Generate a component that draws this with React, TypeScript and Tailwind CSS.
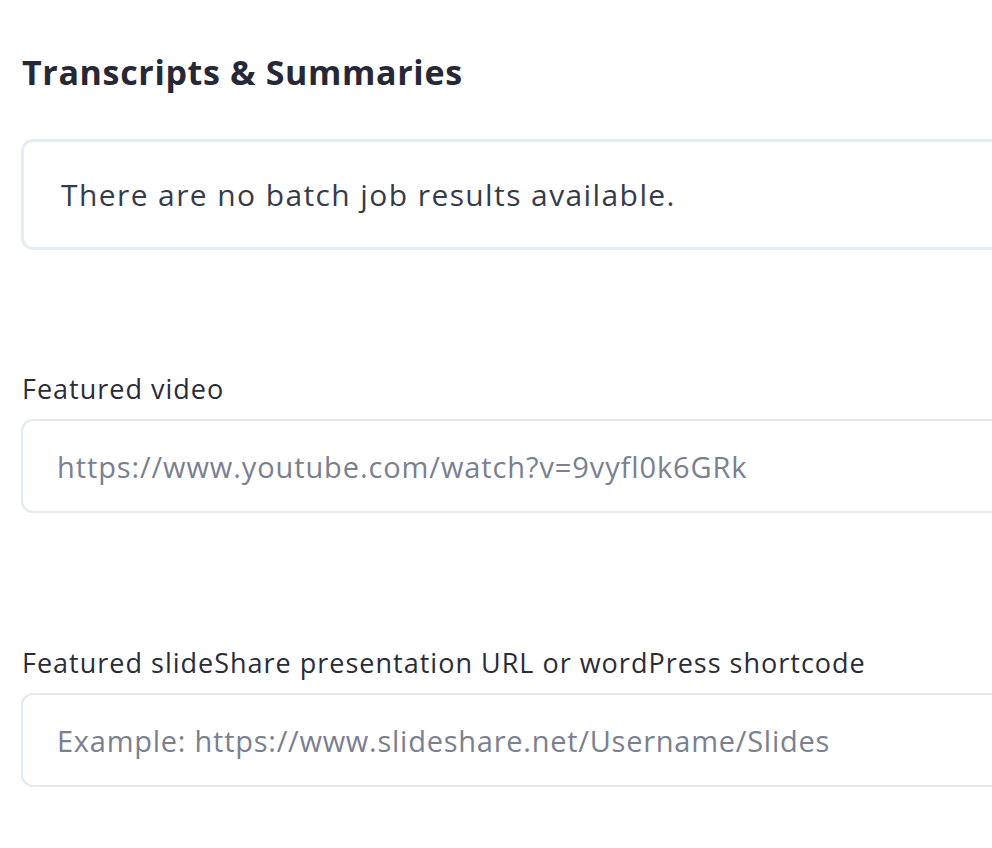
import React from "react";

export default function App() {
  return (
    <div className="h-[848px] w-[992px] overflow-hidden bg-white font-['Open_Sans','Lato',sans-serif]">
      <div className="w-[1100px] pl-[22px] pt-[50px]">
        {/* Section title */}
        <h2 className="text-[34px] font-bold leading-[44px] tracking-[0.65px] text-[#262935]">Transcripts &amp; Summaries</h2>

        {/* Empty batch results */}
        <div className="mt-[45px] ml-[-1px] flex h-[111px] items-center rounded-[12px] border-[3px] border-[#e5ecf3] px-[37px]">
          <p className="text-[30px] leading-[40px] tracking-[1.4px] text-[#363b4b]">There are no batch job results available.</p>
        </div>

        {/* Featured video */}
        <div className="mt-[122px]">
          <label className="block text-[27px] leading-[34px] tracking-[1px] text-[#2a2d37]">Featured video</label>
          <input
            type="text"
            placeholder="https://www.youtube.com/watch?v=9vyfl0k6GRk"
            className="mt-[13px] ml-[-1px] h-[94px] w-full rounded-[12px] border-2 border-[#e4e9f0] px-[34px] text-[29px] tracking-[0.9px] text-[#363b4b] outline-none placeholder:text-[#7b8090]"
          />
        </div>

        {/* SlideShare */}
        <div className="mt-[133px]">
          <label className="block text-[27px] leading-[34px] tracking-[1px] text-[#2a2d37]">
            Featured slideShare presentation URL or wordPress shortcode
          </label>
          <input
            type="text"
            placeholder="Example: https://www.slideshare.net/Username/Slides"
            className="mt-[13px] ml-[-1px] h-[94px] w-full rounded-[12px] border-2 border-[#e4e9f0] px-[34px] text-[29px] tracking-[0.75px] text-[#363b4b] outline-none placeholder:text-[#7b8090]"
          />
        </div>
      </div>
    </div>
  );
}
